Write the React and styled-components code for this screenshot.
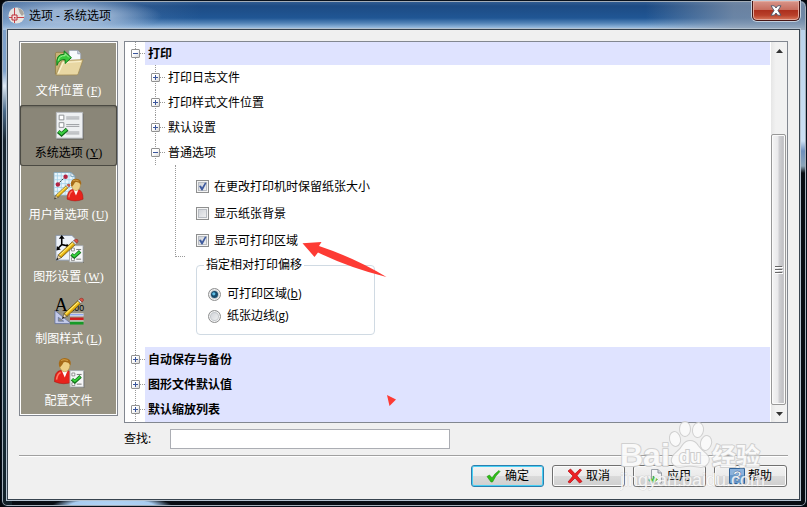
import React, { useState } from 'react';
import styled, { createGlobalStyle, css } from 'styled-components';

const GlobalStyle = createGlobalStyle`
    * { box-sizing: border-box; }
    body {
        margin: 0;
        background: #05080c;
        color: #000;
        font-family: "Open Sans", "Noto Sans CJK SC", sans-serif;
        font-size: 12px;
        line-height: 18px;
    }
    button, input {
        font: inherit;
        color: inherit;
        margin: 0;
    }
`;

const dots = '#9a9a9a';

const Window = styled.div`
    position: relative;
    display: flex;
    flex-direction: column;
    min-height: 100vh;
    margin-left: 1px;
    padding: 0 6px 6px 5px;
    border: 1px solid #07101c;
    border-radius: 7px 7px 6px 6px;
    box-shadow: inset 0 0 0 1px #a3adb8;
    background:
        radial-gradient(ellipse 90px 18px at 70px 15px, rgba(180, 200, 225, .75) 40%, rgba(180, 200, 225, 0)) no-repeat,
        linear-gradient(90deg, rgba(160, 185, 218, .4) 0, rgba(160, 185, 218, 0) 200px) 0 0 / 100% 29px no-repeat,
        linear-gradient(90deg, transparent 80%, rgba(146, 158, 175, .65) 91%, rgba(146, 158, 175, .7)) 0 0 / 100% 29px no-repeat,
        linear-gradient(#356095 0, #1d4b84 5px, #205694 17px, #5182b6 22px, #a9c9e8 28px) 0 0 / 100% 29px no-repeat,
        radial-gradient(ellipse 60px 10px at 110px 100%, #b4d5f5 0, #a8ccf0 70%, transparent) no-repeat,
        linear-gradient(#7c9fc9 0, #7fa2cb 70px, #dfeaf5 85px, #4a6a89 110px, #16242f 140px, #18303c 380px, #122028 100%) 0 0 / 10px 100% no-repeat,
        linear-gradient(#b6cfe9 0, #cce0f3 140px, #6f90bd 150px, #8da6b8 165px, #070d13 172px) 100% 0 / 10px 100% no-repeat,
        #080d14;
`;

const TitleBar = styled.header`
    display: flex;
    align-items: flex-start;
    height: 28px;
    padding-left: 1px;
    .app-icon {
        margin-top: 6px;
    }
    h1 {
        flex: 1;
        margin: 5px 0 0 4px;
        font-size: 12px;
        line-height: 20px;
        font-weight: 400;
    }
`;

const CloseButton = styled.button`
    display: flex;
    align-items: center;
    justify-content: center;
    width: 48px;
    height: 20px;
    padding: 0;
    border: 1px solid #471614;
    border-top: none;
    border-radius: 0 0 5px 5px;
    box-shadow: inset 0 0 0 1px #e3a99d, 0 0 0 1px #c3cedb;
    background: linear-gradient(#d8958a 0, #c86f60 45%, #ac2f1d 48%, #b8402a 75%, #d97a5e 100%);
`;

const Client = styled.main`
    flex: 1;
    display: grid;
    grid-template-columns: 99px minmax(0, 1fr);
    grid-template-rows: auto auto 1fr;
    column-gap: 6px;
    align-items: start;
    padding: 11px;
    border: 1px solid #37434f;
    box-shadow: 0 0 0 1px #b4c2d0;
    background: #f0f0f0;
`;

const Sidebar = styled.nav`
    display: flex;
    flex-direction: column;
    gap: 1px;
    padding: 1px 0;
    border: 1px solid #828790;
    box-shadow: inset 0 0 0 1px #fff;
    background: #979383;
`;

const NavButton = styled.button`
    display: flex;
    flex-direction: column;
    align-items: center;
    height: 61px;
    padding: 4px 0 0;
    border: none;
    background: none;
    color: #fff;
    span {
        line-height: 26px;
        white-space: nowrap;
    }
    small {
        margin-left: 3px;
        font-family: "Liberation Serif", serif;
        font-size: 12px;
    }
    ${({ $active }) => $active && css`
        padding-top: 5px;
        border-radius: 3px;
        box-shadow: inset 0 0 0 1px #4b4a43, inset 0 2px 2px #6c6a5f;
        background: #8a8678;
        color: #000;
    `}
`;

const TreePanel = styled.section`
    position: relative;
    display: flex;
    border: 1px solid #828790;
    background: #fff;
`;

const Tree = styled.div`
    flex: 1;
    min-width: 0;
    background: linear-gradient(${dots} 50%, transparent 50%) 10px 0 / 1px 2px repeat-y;
`;

const Row = styled.div`
    display: flex;
    align-items: center;
    height: ${({ $first }) => ($first ? 23 : 25)}px;
    padding-left: ${({ $nested }) => ($nested ? 26 : 6)}px;
    ${({ $nested }) => $nested && css`
        background: linear-gradient(${dots} 50%, transparent 50%) 30px 0 / 1px 2px repeat-y;
    `}
    ${({ $nested, $last }) => $nested && $last && css`
        background-size: 1px 2px;
        background-clip: content-box;
    `}
    .stem {
        width: 5px;
        border-top: 1px dotted ${dots};
    }
    .label {
        flex: 1;
        display: flex;
        align-items: center;
        height: 100%;
        padding-left: 3px;
        background: ${({ $nested }) => ($nested ? '#fff' : '#dfe3ff')};
        font-weight: ${({ $nested }) => ($nested ? 400 : 700)};
    }
`;

const Toggle = styled.button`
    display: block;
    width: 9px;
    height: 9px;
    padding: 0;
    border: 1px solid #919191;
    border-radius: 1px;
    background: linear-gradient(135deg, #fff 40%, #d9d9d9);
    svg {
        display: block;
    }
`;

const Options = styled.div`
    display: grid;
    grid-template-columns: 10px 179px;
    column-gap: 11px;
    align-items: start;
    padding: 0 0 12px 50px;
    .branch {
        height: 92px;
        border-left: 1px dotted ${dots};
        border-bottom: 1px dotted ${dots};
    }
    .fields {
        padding-top: 8px;
    }
`;

const Choice = styled.label`
    display: flex;
    align-items: center;
    gap: ${({ $radio }) => ($radio ? 6 : 5)}px;
    height: ${({ $radio }) => ($radio ? 22 : 27)}px;
    white-space: nowrap;
`;

const Mark = styled.span`
    display: grid;
    input, svg {
        grid-area: 1 / 1;
        width: 13px;
        height: 13px;
    }
    input {
        appearance: none;
        border: 1px solid #8e8f8f;
        background: linear-gradient(135deg, #c9cdd3, #f6f6f6);
        box-shadow: inset 0 0 0 1px #f4f4f4, inset 0 0 0 2px #b8bcc2;
    }
    input[type='radio'] {
        border-radius: 50%;
        box-shadow: inset 0 0 0 1px #f4f4f4, inset 0 0 0 2px #c4c8cc;
    }
    svg {
        visibility: hidden;
        pointer-events: none;
    }
    input:checked + svg {
        visibility: visible;
    }
`;

const Group = styled.fieldset`
    margin: 2px 0 0;
    padding: 9px 11px 7px;
    border: 1px solid #d0dae3;
    border-radius: 4px;
    legend {
        margin-left: -4px;
        padding: 0 2px;
    }
`;

const ScrollBar = styled.div`
    display: flex;
    flex-direction: column;
    width: 17px;
    border-left: 1px solid #fff;
    background: linear-gradient(90deg, #e6e6e6, #f1f1f1 30%, #f1f1f1);
    button {
        display: flex;
        align-items: center;
        justify-content: center;
        height: 17px;
        padding: 0;
        border: none;
        background: none;
    }
    .thumb {
        flex: 1;
        display: flex;
        align-items: center;
        justify-content: center;
        margin: 75px 1px 0 0;
        border: 1px solid #989898;
        border-radius: 2px;
        box-shadow: inset 0 0 0 1px #fafafa;
        background: linear-gradient(90deg, #f5f5f5 0, #e9e9eb 45%, #cfcfd2 55%, #c0c0c4 85%, #dcdcdc);
    }
`;

const SearchRow = styled.div`
    grid-column: 2;
    display: flex;
    align-items: center;
    margin-top: 6px;
    label {
        width: 46px;
    }
    input {
        width: 280px;
        height: 20px;
        padding: 0 4px;
        border: 1px solid #abadb3;
        background: #fff;
    }
`;

const Footer = styled.footer`
    grid-column: 1 / -1;
    display: flex;
    justify-content: flex-end;
    gap: 8px;
    margin-top: 6px;
    padding: 9px 1px 0 0;
    border-top: 1px solid #a0a0a0;
    box-shadow: inset 0 1px 0 #fff;
`;

const ActionButton = styled.button`
    display: flex;
    align-items: center;
    justify-content: center;
    gap: 3px;
    width: 73px;
    height: 22px;
    padding: 0;
    border: 1px solid ${({ $primary }) => ($primary ? '#2c7fae' : '#707070')};
    border-radius: 3px;
    box-shadow: inset 0 0 0 1px ${({ $primary }) => ($primary ? '#48d0f5' : '#fcfcfc')};
    background: linear-gradient(#f2f2f2 0, #ebebeb 48%, #dadada 50%, #cfcfcf 100%);
`;

const Annotation = styled.svg`
    position: absolute;
    left: 0;
    top: 0;
    pointer-events: none;
`;

const Watermark = styled.svg`
    position: absolute;
    right: 32px;
    bottom: 9px;
    pointer-events: none;
`;

const Pencil = ({ transform }) => (
    <g transform={transform}>
        <path d='M0 0 L2 -5.5 L5 -2.5 Z' fill='#f3d9a6' stroke='#333' strokeWidth='.6' />
        <path d='M0 0 L.8 -2.4 L2.2 -1.1 Z' fill='#111' />
        <path d='M2 -5.500 L16.500 -19 L19.500 -16 L5 -2.500 Z' fill='#f2c51c' stroke='#4a3808' strokeWidth='.7' />
        <path d='M3.300 -5 L17.300 -18' stroke='#fff1a0' strokeWidth='.9' />
        <path d='M4.500 -3.300 L18.700 -16.500' stroke='#b87d08' strokeWidth='.7' />
        <path d='M16.500 -19 L18 -20.500 L21 -17.500 L19.500 -16 Z' fill='#d5d8de' stroke='#666' strokeWidth='.5' />
        <path d='M18 -20.500 Q20 -22.500 22 -21 Q23.200 -19.500 21 -17.500 Z' fill='#df5546' stroke='#8b271f' strokeWidth='.6' />
    </g>
);

const Person = ({ transform }) => (
    <g transform={transform}>
        <path d='M0 24 Q0 14 6 13 L12 13 Q18 14 18 24 Q9 28 0 24 Z' fill='#e8231c' stroke='#9e100c' strokeWidth='.5' />
        <path d='M2 22 Q3 16 6 15' fill='none' stroke='#ff7a65' strokeWidth='1.5' />
        <path d='M7 13 L10 20 L13 13 Z' fill='#fff' />
        <ellipse cx='10' cy='8' rx='5' ry='6.4' fill='#edcf84' stroke='#a9812e' strokeWidth='.5' />
        <path d='M4.500 9 Q3 1.500 10 1 Q17 1.500 15.800 8 Q13 4 9 5 Q7.500 8 5.500 10 Z' fill='#a66b18' />
        <path d='M6.500 3.500 Q9 1.800 13 3.500' fill='none' stroke='#d4a148' strokeWidth='1' />
    </g>
);

const MiniList = ({ transform }) => (
    <g transform={transform}>
        <path d='M1 1 H15 V18 H1 Z' fill='#62625b' opacity='.6' />
        <path d='M0 0 H14 V17 H0 Z' fill='#f5f6f7' stroke='#a8acb0' />
        <path d='M2 2.5 H5 V5.500 H2 Z M2 12.500 H5 V15.500 H2 Z' fill='#fff' stroke='#777' strokeWidth='.8' />
        <path d='M7 4 H12 M7 14 H12' stroke='#777' />
        <path d='M2 9 L5 11.500 L11 6' fill='none' stroke='#14711c' strokeWidth='3.600' />
        <path d='M2.500 9 L5 11 L10.500 6.400' fill='none' stroke='#35d23b' strokeWidth='1.800' />
    </g>
);

const FolderIcon = () => (
    <svg width='32' height='32' viewBox='0 0 32 32' aria-hidden='true'>
        <path d='M2 28 V7 Q2 5.500 3.500 5.500 H10 L12 8 H27 V14' fill='#c9b377' stroke='#8e7a44' strokeWidth='.8' />
        <path d='M16 3.500 H25 L28 7 V18 H16 Z' fill='#f7f9fc' stroke='#9aa5b5' strokeWidth='.8' />
        <path d='M25 3.500 V7 H28' fill='#cfd8e6' stroke='#8a95a8' strokeWidth='.8' />
        <path d='M2.500 29 L8 15.500 Q8.500 14 10 14 L30.500 13 L25.500 27.500 Q25 28.800 23.500 28.800 Z' fill='#e8d7a3' stroke='#a08b52' strokeWidth='.8' />
        <path d='M5 27 L10 16 L28.500 15' fill='none' stroke='#fbf3d3' strokeWidth='1.200' />
        <path d='M3.500 19 Q2 7 11 7.500 V4 L18.500 11 L12 17 V13 Q6 12 3.500 19 Z' fill='#38c83b' stroke='#0c7a18' />
        <path d='M5 14 Q6 8.500 12 9 V6.800 L16 10.800' fill='none' stroke='#a5f59b' />
    </svg>
);

const ListIcon = () => (
    <svg width='32' height='32' viewBox='0 0 32 32' aria-hidden='true'>
        <path d='M3 4 H32 V32 H3 Z' fill='#66665f' opacity='.6' />
        <path d='M2.500 2.500 H30.500 V30 H2.500 Z' fill='#eef0f2' stroke='#b4b9be' />
        <path d='M5.500 5.500 H10.500 V10.500 H5.500 Z M5.500 13.500 H10.500 V18.500 H5.500 Z' fill='#fff' stroke='#8a8d90' />
        <path d='M13 7.500 H27 M13 9.500 H27 M13 15.500 H27 M13 17.500 H27 M13 23.500 H27 M13 25.500 H27' stroke='#9a9da1' />
        <path d='M4.500 23 L8 26 L14 20.500' fill='none' stroke='#11661b' strokeWidth='4.200' />
        <path d='M5 23 L8 25.500 L13.500 20.800' fill='none' stroke='#3bcf40' strokeWidth='2.200' />
    </svg>
);

const UserPrefIcon = () => (
    <svg width='32' height='32' viewBox='0 0 32 32' aria-hidden='true'>
        <path d='M.5 1.500 H18 L22 5.500 V25 H.5 Z' fill='#eaf6fc' stroke='#7da4bd' strokeWidth='.8' />
        <path d='M4 2 V25 M8 2 V25 M12 2 V25 M16 2 V25 M20 5 V25 M1 5 H21 M1 9 H22 M1 13 H22 M1 17 H22 M1 21 H22' stroke='#9fcfe8' strokeWidth='.8' />
        <path d='M18 1.500 V5.500 H22 Z' fill='#fff' stroke='#6992af' strokeWidth='.8' />
        <path d='M4 14 L12.500 5.500' stroke='#222' strokeDasharray='2 1' />
        <circle cx='4.500' cy='14' r='2.300' fill='#b32443' />
        <circle cx='12.500' cy='6' r='2.300' fill='#b32443' />
        <Pencil transform='translate(1 29) scale(.72)' />
        <Person transform='translate(14 7) scale(.92)' />
    </svg>
);

const DrawingIcon = () => (
    <svg width='32' height='32' viewBox='0 0 32 32' aria-hidden='true'>
        <path d='M2.500 2.500 H19 L23 6.500 V28 H2.500 Z' fill='#eef3fa' stroke='#8291aa' strokeWidth='.8' />
        <path d='M8.500 5 V12 L15 13.500 M8.500 12 L5 15.500' fill='none' stroke='#000' strokeWidth='1.600' />
        <path d='M8.500 2 L5.500 6 H11.500 Z M18 14 L13.500 11 V16.500 Z M3 18 L3.500 13.500 L7.500 17 Z' fill='#000' />
        <MiniList transform='translate(16.500 13)' />
        <Pencil transform='translate(3 28)' />
    </svg>
);

const StyleIcon = () => (
    <svg width='32' height='32' viewBox='0 0 32 32' aria-hidden='true'>
        <text x='1' y='17' fontFamily='Liberation Serif, serif' fontSize='19'>A</text>
        <text x='19' y='17' fontFamily='Liberation Sans, sans-serif' fontSize='9'>.00</text>
        <path d='M1.500 16 V29.500 H18 Z M5 23 L10.500 27 H5 Z' fill='#c4cbea' fillRule='evenodd' stroke='#62709e' strokeWidth='.8' />
        <path d='M17 20.500 H31' stroke='#fff' strokeWidth='3' />
        <path d='M17 20.500 H31' stroke='#4d75df' />
        <path d='M17 24.500 H31' stroke='#cf1c1c' strokeWidth='2.500' />
        <path d='M17 27 H31' stroke='#fff' />
        <path d='M17 29 H31' stroke='#169a27' strokeWidth='3' />
        <Pencil transform='translate(9 24.500) scale(.98)' />
    </svg>
);

const ProfileIcon = () => (
    <svg width='32' height='32' viewBox='0 0 32 32' aria-hidden='true'>
        <Person transform='translate(1 0) scale(1.060)' />
        <MiniList transform='translate(17 14)' />
    </svg>
);

const CheckIcon = () => (
    <svg width='16' height='16' viewBox='0 0 16 16' aria-hidden='true'>
        <path d='M1 8.500 L3.500 7 L6 10 Q9 5 13 2.500 L14 3.500 Q9 8 6.500 14 L5 14 Z' fill='#2fbd18' stroke='#20960f' strokeWidth='.6' />
    </svg>
);

const CrossIcon = () => (
    <svg width='16' height='16' viewBox='0 0 16 16' aria-hidden='true'>
        <path d='M1 3 L3.500 1 L8 5.800 L13 1 L14.500 2 L10 7.800 L15 13.500 L12.500 15 L8 10 L3 15 L1 14 L6 8 Z' fill='#ed2024' stroke='#b40d12' strokeWidth='.7' />
    </svg>
);

const ApplyIcon = () => (
    <svg width='16' height='16' viewBox='0 0 16 16' aria-hidden='true'>
        <path d='M3.500 1.500 H10 L13.500 5 V15 H3.500 Z' fill='#f4f5f7' stroke='#9ba0a8' />
        <path d='M10 1.500 V5 H13.500' fill='#d2d6dc' stroke='#8c929b' />
        <path d='M1 11 H5 V8 L9.500 11.500 L5 15 V13 H1 Z' fill='#56cc4b' stroke='#2c9b2a' strokeWidth='.6' />
    </svg>
);

const HelpIcon = () => (
    <svg width='16' height='16' viewBox='0 0 16 16' aria-hidden='true'>
        <path d='M.5 .5 H15.500 V15.500 H.5 Z' fill='#6597cb' stroke='#316297' />
        <path d='M1 1 H15 V7 H1 Z' fill='#8bb2dc' />
        <text x='4' y='13' fontFamily='Liberation Sans, sans-serif' fontSize='14' fontWeight='700' fill='#fff' stroke='#28568a' strokeWidth='.4'>?</text>
    </svg>
);

const AppIcon = () => (
    <svg className='app-icon' width='17' height='17' viewBox='0 0 17 17' aria-hidden='true'>
        <circle cx='8.500' cy='8.500' r='8' fill='#e7e4e0' />
        <path d='M10 1 Q15 2 16 7 L14 9 Q11 6 10 1 Z' fill='#aaa69f' />
        <path d='M6.500 1 V16 M1 10.500 H16' stroke='#c8434a' />
        <path d='M4 8 H9 V13 H4 Z' fill='#f6dede' stroke='#b82f37' />
        <path d='M6 10 H7.500 V11.500 H6 Z' fill='#b82f37' />
    </svg>
);

const navItems = [
    { text: '文件位置', hotkey: 'F', Icon: FolderIcon },
    { text: '系统选项', hotkey: 'Y', Icon: ListIcon },
    { text: '用户首选项', hotkey: 'U', Icon: UserPrefIcon },
    { text: '图形设置', hotkey: 'W', Icon: DrawingIcon },
    { text: '制图样式', hotkey: 'L', Icon: StyleIcon },
    { text: '配置文件', Icon: ProfileIcon },
];

const actions = [
    { text: '确定', Icon: CheckIcon },
    { text: '取消', Icon: CrossIcon },
    { text: '应用', Icon: ApplyIcon },
    { text: '帮助', Icon: HelpIcon },
];

const TreeRow = ({ text, open, ...props }) => (
    <Row {...props}>
        <Toggle type='button' aria-label={text} aria-expanded={!!open}>
            <svg width='7' height='7' viewBox='0 0 7 7'>
                <path d={open ? 'M1 3.500 H6' : 'M1 3.500 H6 M3.500 1 V6'} stroke='#3b569c' />
            </svg>
        </Toggle>
        <span className='stem' />
        <span className='label'>{text}</span>
    </Row>
);

const CheckBox = ({ text, checked }) => (
    <Choice>
        <Mark>
            <input type='checkbox' defaultChecked={checked} />
            <svg viewBox='0 0 13 13'>
                <path d='M3 6 L5 5.500 L6 7.500 L9 2.500 L10.500 3 L6.500 10.500 L5.500 10.500 Z' fill='#3f5b9e' />
            </svg>
        </Mark>
        <span>{text}</span>
    </Choice>
);

const Radio = ({ text, hotkey, checked }) => (
    <Choice $radio>
        <Mark>
            <input type='radio' name='offset' defaultChecked={checked} />
            <svg viewBox='0 0 13 13'>
                <circle cx='6.500' cy='6.500' r='3.500' fill='#174b6c' />
                <circle cx='5.800' cy='5.800' r='1.600' fill='#5fbde4' />
            </svg>
        </Mark>
        <span>{text}(<u>{hotkey}</u>)</span>
    </Choice>
);

const App = () => {
    const [active, setActive] = useState('系统选项');
    return (
        <>
            <GlobalStyle />
            <Window>
                <TitleBar>
                    <AppIcon />
                    <h1>选项 - 系统选项</h1>
                    <CloseButton type='button' aria-label='关闭'>
                        <svg width='12' height='11' viewBox='0 0 12 11'>
                            <path d='M1 .8 H4.300 L6 3 L7.700 .8 H11 L8 5.500 L11 10.200 H7.700 L6 8 L4.300 10.200 H1 L4 5.500 Z' fill='#fff' stroke='#4a5468' strokeWidth='.9' />
                        </svg>
                    </CloseButton>
                </TitleBar>
                <Client>
                    <Sidebar>
                        {navItems.map(({ text, hotkey, Icon }) => (
                            <NavButton key={text} type='button' $active={active === text} onClick={() => { setActive(text) }}>
                                <Icon />
                                <span>{text}{hotkey && <small>(<u>{hotkey}</u>)</small>}</span>
                            </NavButton>
                        ))}
                    </Sidebar>
                    <TreePanel>
                        <Tree>
                            <TreeRow text='打印' open $first />
                            <TreeRow text='打印日志文件' $nested />
                            <TreeRow text='打印样式文件位置' $nested />
                            <TreeRow text='默认设置' $nested />
                            <TreeRow text='普通选项' open $nested />
                            <Options>
                                <div className='branch' />
                                <div className='fields'>
                                    <CheckBox text='在更改打印机时保留纸张大小' checked />
                                    <CheckBox text='显示纸张背景' />
                                    <CheckBox text='显示可打印区域' checked />
                                    <Group>
                                        <legend>指定相对打印偏移</legend>
                                        <Radio text='可打印区域' hotkey='b' checked />
                                        <Radio text='纸张边线' hotkey='g' />
                                    </Group>
                                </div>
                            </Options>
                            <TreeRow text='自动保存与备份' />
                            <TreeRow text='图形文件默认值' />
                            <TreeRow text='默认缩放列表' />
                        </Tree>
                        <ScrollBar>
                            <button type='button' aria-label='向上'>
                                <svg width='7' height='4' viewBox='0 0 7 4'><path d='M0 4 L3.500 0 L7 4 Z' fill='#333' /></svg>
                            </button>
                            <div className='thumb'>
                                <svg width='8' height='8' viewBox='0 0 8 8'>
                                    <path d='M0 1.500 H8 M0 4.500 H8 M0 7.500 H8' stroke='#fff' />
                                    <path d='M0 .5 H7 M0 3.500 H7 M0 6.500 H7' stroke='#666' />
                                </svg>
                            </div>
                            <button type='button' aria-label='向下'>
                                <svg width='7' height='4' viewBox='0 0 7 4'><path d='M0 0 L3.500 4 L7 0 Z' fill='#333' /></svg>
                            </button>
                        </ScrollBar>
                        <Annotation width='290' height='380' viewBox='0 0 290 380' aria-hidden='true'>
                            <path d='M177.500 201.300 L196.500 200 L194 204 Q230 216 261.500 235 Q225 226 193 210.500 L189.500 215 Z' fill='#fd3b34' />
                            <path d='M262 353 L271 357.500 L264.500 364 Z' fill='#fd3b34' />
                        </Annotation>
                    </TreePanel>
                    <SearchRow>
                        <label htmlFor='search'>查找:</label>
                        <input id='search' type='text' />
                    </SearchRow>
                    <Footer>
                        {actions.map(({ text, Icon }, i) => (
                            <ActionButton key={text} type='button' $primary={i === 0}>
                                <Icon />
                                <span>{text}</span>
                            </ActionButton>
                        ))}
                    </Footer>
                </Client>
                <Watermark width='154' height='76' viewBox='0 0 154 76' aria-hidden='true'>
                    <g fill='#fafafa' stroke='#cdcdcd' strokeWidth='2' strokeLinejoin='round' paintOrder='stroke' opacity='.9'>
                        <text x='0' y='45' fontFamily='Liberation Sans, sans-serif' fontSize='32' fontWeight='700'>Bai</text>
                        <ellipse cx='55' cy='18' rx='5' ry='7' transform='rotate(-12 55 18)' />
                        <ellipse cx='65' cy='8' rx='5' ry='7' />
                        <ellipse cx='78' cy='9' rx='5' ry='7' transform='rotate(8 78 9)' />
                        <ellipse cx='86' cy='22' rx='5' ry='7' transform='rotate(15 86 22)' />
                        <path d='M70 20 Q75 20 78 25 Q81 29 86 33 Q91 38 87 43 Q84 47 78 45.500 Q70 44 62 45.500 Q55 47 52 41 Q51 36 56 32 Q61 28 63 24 Q66 20 70 20 Z' />
                        <text x='92' y='44' fontFamily='Noto Sans CJK SC, sans-serif' fontSize='24' fontWeight='700'>经验</text>
                    </g>
                    <text x='59' y='42' fontFamily='Liberation Sans, sans-serif' fontSize='18' fontWeight='700' fill='#fafafa' stroke='#cdcdcd' strokeWidth='2' paintOrder='stroke'>du</text>
                    <text x='0' y='65' fontFamily='Liberation Sans, sans-serif' fontSize='18' fill='#fff' fillOpacity='.8' stroke='#bdbdbd' strokeOpacity='.4' strokeWidth='1' paintOrder='stroke'>jingyan.baidu.com</text>
                </Watermark>
            </Window>
        </>
    );
};

export default App;
